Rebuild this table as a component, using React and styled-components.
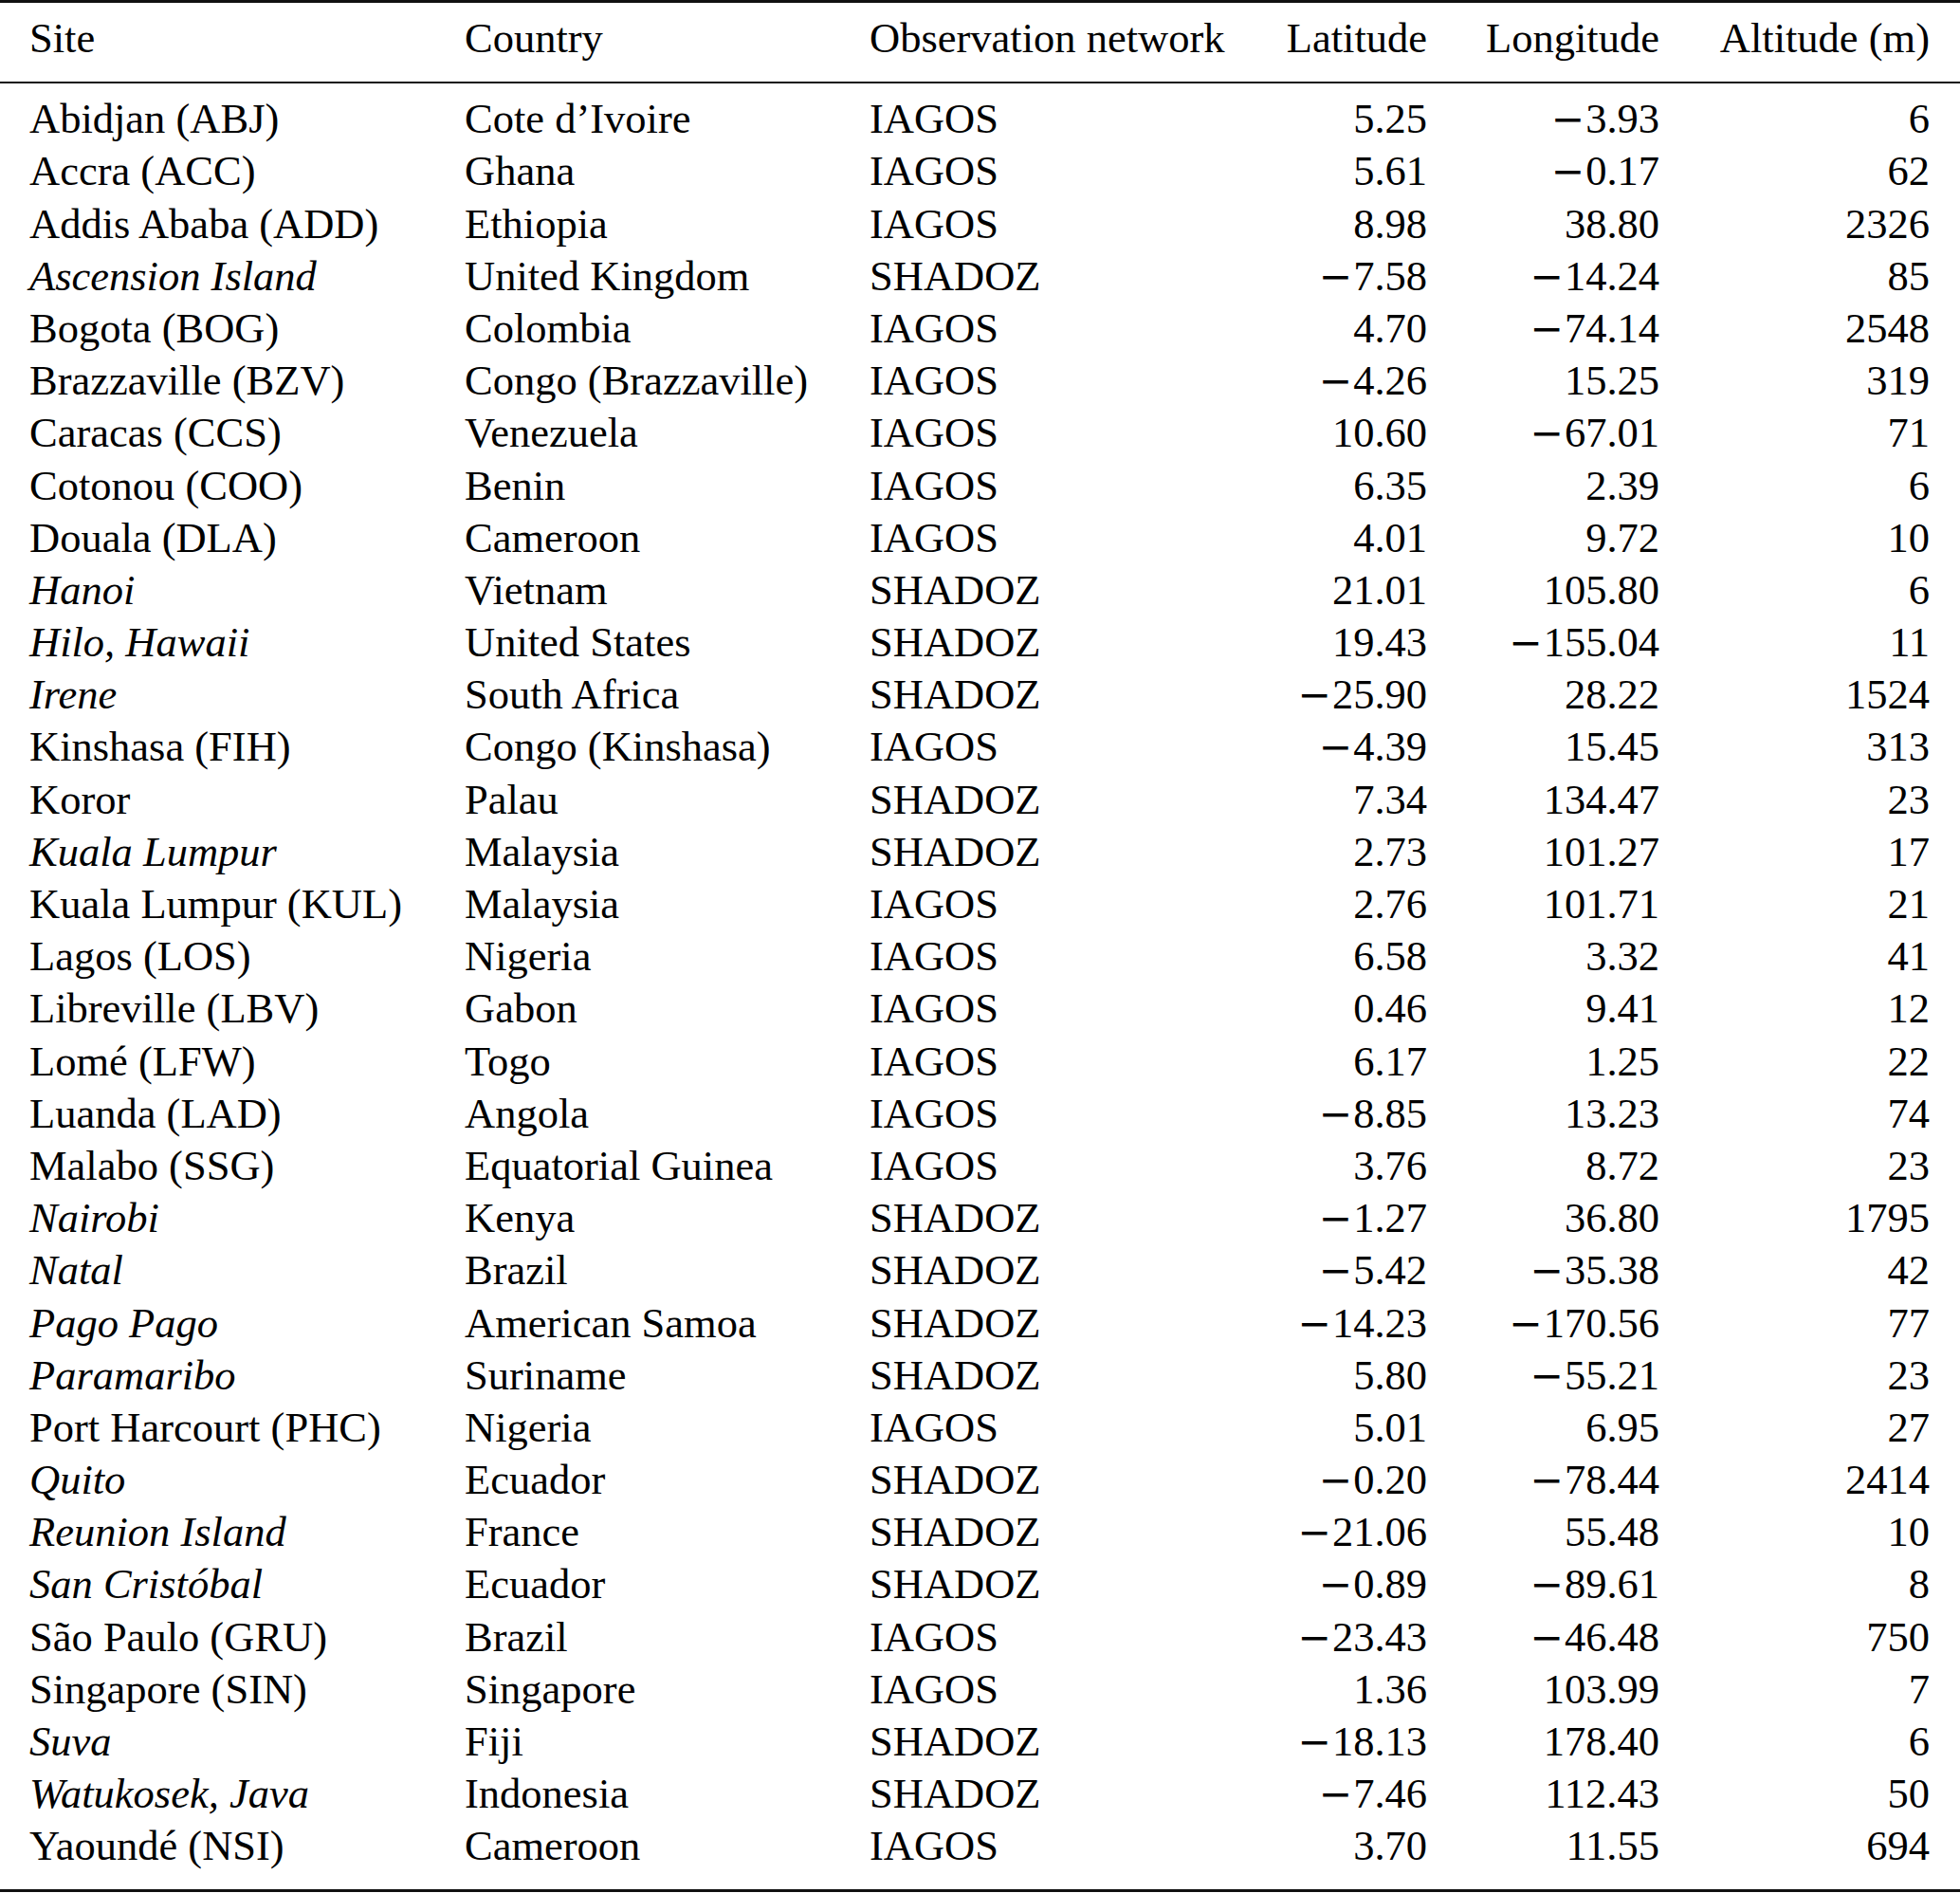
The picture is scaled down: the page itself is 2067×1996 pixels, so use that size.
import React from "react"
import styled, { createGlobalStyle } from "styled-components"

const rows = [
  ["Abidjan (ABJ)", false, "Cote d’Ivoire", "IAGOS", "5.25", "−3.93", "6"],
  ["Accra (ACC)", false, "Ghana", "IAGOS", "5.61", "−0.17", "62"],
  ["Addis Ababa (ADD)", false, "Ethiopia", "IAGOS", "8.98", "38.80", "2326"],
  ["Ascension Island", true, "United Kingdom", "SHADOZ", "−7.58", "−14.24", "85"],
  ["Bogota (BOG)", false, "Colombia", "IAGOS", "4.70", "−74.14", "2548"],
  ["Brazzaville (BZV)", false, "Congo (Brazzaville)", "IAGOS", "−4.26", "15.25", "319"],
  ["Caracas (CCS)", false, "Venezuela", "IAGOS", "10.60", "−67.01", "71"],
  ["Cotonou (COO)", false, "Benin", "IAGOS", "6.35", "2.39", "6"],
  ["Douala (DLA)", false, "Cameroon", "IAGOS", "4.01", "9.72", "10"],
  ["Hanoi", true, "Vietnam", "SHADOZ", "21.01", "105.80", "6"],
  ["Hilo, Hawaii", true, "United States", "SHADOZ", "19.43", "−155.04", "11"],
  ["Irene", true, "South Africa", "SHADOZ", "−25.90", "28.22", "1524"],
  ["Kinshasa (FIH)", false, "Congo (Kinshasa)", "IAGOS", "−4.39", "15.45", "313"],
  ["Koror", false, "Palau", "SHADOZ", "7.34", "134.47", "23"],
  ["Kuala Lumpur", true, "Malaysia", "SHADOZ", "2.73", "101.27", "17"],
  ["Kuala Lumpur (KUL)", false, "Malaysia", "IAGOS", "2.76", "101.71", "21"],
  ["Lagos (LOS)", false, "Nigeria", "IAGOS", "6.58", "3.32", "41"],
  ["Libreville (LBV)", false, "Gabon", "IAGOS", "0.46", "9.41", "12"],
  ["Lomé (LFW)", false, "Togo", "IAGOS", "6.17", "1.25", "22"],
  ["Luanda (LAD)", false, "Angola", "IAGOS", "−8.85", "13.23", "74"],
  ["Malabo (SSG)", false, "Equatorial Guinea", "IAGOS", "3.76", "8.72", "23"],
  ["Nairobi", true, "Kenya", "SHADOZ", "−1.27", "36.80", "1795"],
  ["Natal", true, "Brazil", "SHADOZ", "−5.42", "−35.38", "42"],
  ["Pago Pago", true, "American Samoa", "SHADOZ", "−14.23", "−170.56", "77"],
  ["Paramaribo", true, "Suriname", "SHADOZ", "5.80", "−55.21", "23"],
  ["Port Harcourt (PHC)", false, "Nigeria", "IAGOS", "5.01", "6.95", "27"],
  ["Quito", true, "Ecuador", "SHADOZ", "−0.20", "−78.44", "2414"],
  ["Reunion Island", true, "France", "SHADOZ", "−21.06", "55.48", "10"],
  ["San Cristóbal", true, "Ecuador", "SHADOZ", "−0.89", "−89.61", "8"],
  ["São Paulo (GRU)", false, "Brazil", "IAGOS", "−23.43", "−46.48", "750"],
  ["Singapore (SIN)", false, "Singapore", "IAGOS", "1.36", "103.99", "7"],
  ["Suva", true, "Fiji", "SHADOZ", "−18.13", "178.40", "6"],
  ["Watukosek, Java", true, "Indonesia", "SHADOZ", "−7.46", "112.43", "50"],
  ["Yaoundé (NSI)", false, "Cameroon", "IAGOS", "3.70", "11.55", "694"],
]

// the math minus of the original is wider than the serif text one
function Num({ value }) {
  if (value.startsWith("−")) {
    return (
      <>
        <Minus>−</Minus>
        {value.slice(1)}
      </>
    )
  }
  return value
}

function SitesTable() {
  return (
    <Table>
      <Head>
        <Row>
          <Cell>Site</Cell>
          <Cell>Country</Cell>
          <Cell>Observation network</Cell>
          <Cell $num>Latitude</Cell>
          <Cell $num>Longitude</Cell>
          <Cell $num>Altitude (m)</Cell>
        </Row>
      </Head>
      <Body>
        {rows.map(([site, italic, country, net, lat, lon, alt]) => (
          <Row key={site + net}>
            <Cell $italic={italic}>{site}</Cell>
            <Cell>{country}</Cell>
            <Cell>{net}</Cell>
            <Cell $num><Num value={lat} /></Cell>
            <Cell $num><Num value={lon} /></Cell>
            <Cell $num>{alt}</Cell>
          </Row>
        ))}
      </Body>
    </Table>
  )
}

export default function App() {
  return (
    <>
      <GlobalStyle />
      <SitesTable />
    </>
  )
}

const GlobalStyle = createGlobalStyle`
  body {
    margin: 0;
    background: #fff;
  }
`
const Table = styled.div`
  width: 2067px;
  border-top: 3px solid #111;
  border-bottom: 3px solid #111;
  font-family: "Liberation Serif", "Times New Roman", serif;
  font-size: 44.5px;
  color: #000;
`
const Head = styled.div`
  padding: 10px 0 18px;
  border-bottom: 2.5px solid #111;
`
const Body = styled.div`
  padding: 10px 0 17px;
`
const Row = styled.div`
  display: grid;
  grid-template-columns: 459px 427px 400px 188px 245px 285px;
  padding: 0 32px 0 31px;
  height: 55.2px;
  line-height: 55.2px;
  white-space: nowrap;
`
const Cell = styled.div`
  text-align: ${props => (props.$num ? "right" : "left")};
  font-style: ${props => (props.$italic ? "italic" : "normal")};
`
const Minus = styled.span`
  font-family: "DejaVu Serif", serif;
  font-size: 0.95em;
  margin-right: 1px;
`
